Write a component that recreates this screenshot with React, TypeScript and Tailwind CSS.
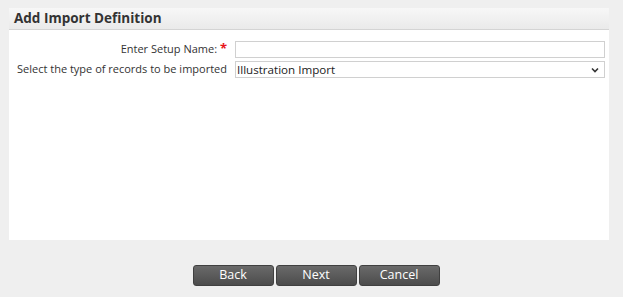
import React from 'react';

const App: React.FC = () => {
  return (
    <div className="w-[623px] h-[297px] bg-[#efefef] font-['Open_Sans',sans-serif] text-[#222] pt-[8px] pl-[9px]">
      {/* Panel */}
      <div className="w-[600px] h-[232px] bg-white flex flex-col">
        <div className="h-[22px] bg-gradient-to-b from-[#f7f7f7] to-[#eaeaea] border-b border-[#d4d4d4] flex items-center px-[5px]">
          <h1 className="text-[13.5px] font-bold text-[#333] leading-none">Add Import Definition</h1>
        </div>
        <div className="pt-[11px] flex flex-col gap-[3px] text-[11px]">
          <div className="flex items-center h-[17px]">
            <label className="w-[226px] shrink-0 text-right pr-[8px] text-[#333]">
              Enter Setup Name: <span className="text-[#e8141b] font-bold text-[13px] leading-none">*</span>
            </label>
            <input className="w-[370px] h-[17px] border border-[#d0d0d0] bg-white outline-none" />
          </div>
          <div className="flex items-center h-[17px]">
            <label className="w-[226px] shrink-0 text-right pr-[8px] text-[#333] whitespace-nowrap">
              Select the type of records to be imported
            </label>
            <div className="w-[370px] h-[17px] border border-[#d0d0d0] bg-white flex items-center justify-between pl-[1px] pr-[5px]">
              <span className="text-[11.6px] text-[#222]">Illustration Import</span>
              <svg width="8" height="6" viewBox="0 0 8 6">
                <path d="M1 1.5 L4 4.5 L7 1.5" fill="none" stroke="#333" strokeWidth="1.6" />
              </svg>
            </div>
          </div>
        </div>
      </div>

      {/* Buttons */}
      <div className="flex justify-center gap-[2px] mt-[25px]">
        {['Back', 'Next', 'Cancel'].map((b) => (
          <button
            key={b}
            className="w-[81px] h-[21px] rounded-[3px] bg-gradient-to-b from-[#6a6a6a] to-[#4c4c4c] border border-[#404040] text-white text-[12.5px] leading-none"
          >
            {b}
          </button>
        ))}
      </div>
    </div>
  );
};

export default App;
